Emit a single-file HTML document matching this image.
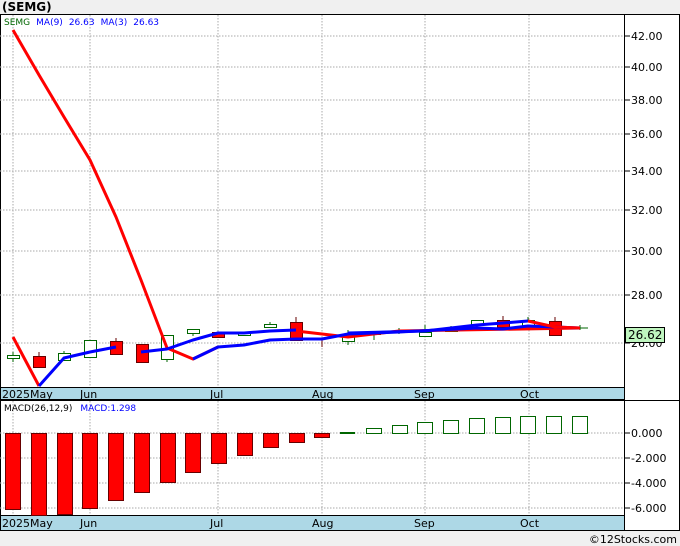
<!DOCTYPE html>
<html><head><style>
body{margin:0;background:#f0f0f0;width:680px;height:546px;overflow:hidden;font-family:"DejaVu Sans","Liberation Sans",sans-serif}
svg{display:block}
</style></head><body>
<svg width="680" height="546" xmlns="http://www.w3.org/2000/svg" font-family="DejaVu Sans, Liberation Sans, sans-serif">
<rect x="0" y="0" width="680" height="546" fill="#f0f0f0"/>
<text x="2" y="11" font-size="12" font-weight="bold" fill="#000">(SEMG)</text>
<rect x="0.5" y="14.5" width="679" height="516" fill="#fff" stroke="#000"/>
<g stroke="#aaa" stroke-dasharray="1.5,1.5" stroke-width="1">
<line x1="13" y1="15" x2="13" y2="387"/><line x1="90" y1="15" x2="90" y2="387"/><line x1="218" y1="15" x2="218" y2="387"/><line x1="322" y1="15" x2="322" y2="387"/><line x1="425" y1="15" x2="425" y2="387"/><line x1="529" y1="15" x2="529" y2="387"/>
<line x1="0" y1="36" x2="624" y2="36"/><line x1="0" y1="67" x2="624" y2="67"/><line x1="0" y1="100" x2="624" y2="100"/><line x1="0" y1="134" x2="624" y2="134"/><line x1="0" y1="171" x2="624" y2="171"/><line x1="0" y1="210" x2="624" y2="210"/><line x1="0" y1="251" x2="624" y2="251"/><line x1="0" y1="295" x2="624" y2="295"/><line x1="0" y1="343" x2="624" y2="343"/>
<line x1="13" y1="401" x2="13" y2="515"/><line x1="90" y1="401" x2="90" y2="515"/><line x1="218" y1="401" x2="218" y2="515"/><line x1="322" y1="401" x2="322" y2="515"/><line x1="425" y1="401" x2="425" y2="515"/><line x1="529" y1="401" x2="529" y2="515"/>
<line x1="0" y1="433" x2="624" y2="433"/><line x1="0" y1="458" x2="624" y2="458"/><line x1="0" y1="483" x2="624" y2="483"/><line x1="0" y1="508" x2="624" y2="508"/>
</g>
<text x="4" y="25" font-size="9"><tspan fill="#060">SEMG</tspan><tspan fill="#00f" dx="6">MA(9)</tspan><tspan fill="#00f" dx="6">26.63</tspan><tspan fill="#00f" dx="6">MA(3)</tspan><tspan fill="#00f" dx="6">26.63</tspan></text>
<!-- candles -->
<g stroke-width="1">
<g stroke="#060" fill="#fff">
<line x1="13" y1="352" x2="13" y2="362"/><rect x="7.5" y="355.5" width="12" height="3"/>
<line x1="64" y1="351" x2="64" y2="361"/><rect x="58.5" y="353.5" width="12" height="7"/>
<rect x="84.5" y="340.5" width="12" height="17"/>
<line x1="167" y1="335" x2="167" y2="362"/><rect x="161.5" y="335.5" width="12" height="24"/>
<line x1="193" y1="329" x2="193" y2="336"/><rect x="187.5" y="329.5" width="12" height="4"/>
<rect x="238.5" y="333.5" width="12" height="2"/>
<line x1="270" y1="322" x2="270" y2="328"/><rect x="264.5" y="324.5" width="12" height="3"/>
<line x1="348" y1="330" x2="348" y2="345"/><rect x="342.5" y="334.5" width="12" height="7"/>
<line x1="374" y1="331" x2="374" y2="340"/><rect x="368.5" y="332.5" width="12" height="2"/>
<line x1="399" y1="328" x2="399" y2="334"/>
<line x1="425" y1="325" x2="425" y2="337"/><rect x="419.5" y="332.5" width="12" height="4"/>
<line x1="451" y1="326" x2="451" y2="332"/><rect x="445.5" y="328.5" width="12" height="3"/>
<rect x="471.5" y="320.5" width="12" height="5"/>
<line x1="528" y1="317" x2="528" y2="326"/><rect x="522.5" y="320.5" width="12" height="6"/>
<line x1="580" y1="325" x2="580" y2="330"/><line x1="574" y1="328" x2="588" y2="328"/>
</g>
<g stroke="#600" fill="#f00">
<line x1="39" y1="352" x2="39" y2="367"/><rect x="33.5" y="356.5" width="12" height="11"/>
<line x1="116" y1="338" x2="116" y2="354"/><rect x="110.5" y="341.5" width="12" height="13"/>
<rect x="136.5" y="344.5" width="12" height="18"/>
<rect x="212.5" y="332.5" width="12" height="5"/>
<line x1="296" y1="317" x2="296" y2="341"/><rect x="290.5" y="322.5" width="12" height="18"/>
<line x1="322" y1="339" x2="322" y2="347"/>
<line x1="503" y1="316" x2="503" y2="327"/><rect x="497.5" y="320.5" width="12" height="7"/>
<line x1="555" y1="317" x2="555" y2="336"/><rect x="549.5" y="321.5" width="12" height="14"/>
</g>
</g>
<!-- MA lines -->
<g fill="none" stroke-width="3" stroke-linejoin="round">
<polyline stroke="#f00" points="13,30 39,75 64,117 90,160 116,217 141,280 167,348 193,359 218,347"/>
<polyline stroke="#f00" points="13,337 39,386"/>
<polyline stroke="#f00" points="296,331 348,337 399,331 580,328"/>
<polyline stroke="#00f" points="39,386 64,358 90,352 116,347"/>
<polyline stroke="#00f" points="141,352 167,349 193,340 218,333 244,333 270,331 296,330"/>
<polyline stroke="#00f" points="193,359 218,347 244,345 270,340 296,339 322,339 348,334 399,332 477,328 503,329 528,326 555,327 580,328"/>
<polyline stroke="#00f" points="348,333 425,331 477,325 503,323 528,321"/>
<polyline stroke="#f00" points="528,321 555,327 580,328"/>
</g>
<!-- axis -->
<line x1="624.5" y1="15" x2="624.5" y2="530" stroke="#000"/>
<g stroke="#000">
<line x1="624" y1="36" x2="630" y2="36"/><line x1="624" y1="67" x2="630" y2="67"/><line x1="624" y1="100" x2="630" y2="100"/><line x1="624" y1="134" x2="630" y2="134"/><line x1="624" y1="171" x2="630" y2="171"/><line x1="624" y1="210" x2="630" y2="210"/><line x1="624" y1="251" x2="630" y2="251"/><line x1="624" y1="295" x2="630" y2="295"/><line x1="624" y1="343" x2="630" y2="343"/>
<line x1="624" y1="433" x2="630" y2="433"/><line x1="624" y1="458" x2="630" y2="458"/><line x1="624" y1="483" x2="630" y2="483"/><line x1="624" y1="508" x2="630" y2="508"/>
</g>
<g font-size="11" fill="#000">
<text x="631" y="40">42.00</text><text x="631" y="71">40.00</text><text x="631" y="104">38.00</text><text x="631" y="138">36.00</text><text x="631" y="175">34.00</text><text x="631" y="214">32.00</text><text x="631" y="255">30.00</text><text x="631" y="299">28.00</text><text x="631" y="347">26.00</text>
<text x="631" y="437">0.000</text><text x="631" y="462">-2.000</text><text x="631" y="487">-4.000</text><text x="631" y="512">-6.000</text>
</g>
<rect x="625.5" y="327.5" width="39" height="15" fill="#bff5bf" stroke="#000"/>
<text x="628" y="339" font-size="12">26.62</text>
<!-- strips -->
<rect x="0.5" y="387.5" width="624" height="12" fill="#add8e6" stroke="#000"/>
<line x1="0" y1="400.5" x2="680" y2="400.5" stroke="#000"/>
<rect x="0.5" y="515.5" width="624" height="15" fill="#add8e6" stroke="#000"/>
<g font-size="11" fill="#000">
<text x="2" y="398">2025May</text><text x="80" y="398">Jun</text><text x="210" y="398">Jul</text><text x="312" y="398">Aug</text><text x="414" y="398">Sep</text><text x="520" y="398">Oct</text>
<text x="2" y="527">2025May</text><text x="80" y="527">Jun</text><text x="210" y="527">Jul</text><text x="312" y="527">Aug</text><text x="414" y="527">Sep</text><text x="520" y="527">Oct</text>
</g>
<text x="4" y="411" font-size="9"><tspan fill="#000">MACD(26,12,9)</tspan><tspan fill="#00f" dx="8">MACD:1.298</tspan></text>
<!-- MACD bars -->
<g stroke="#600" fill="#f00">
<rect x="5.5" y="433.5" width="15" height="76"/><rect x="31.5" y="433.5" width="15" height="82"/><rect x="57.5" y="433.5" width="15" height="81"/><rect x="82.5" y="433.5" width="15" height="75"/><rect x="108.5" y="433.5" width="15" height="67"/><rect x="134.5" y="433.5" width="15" height="59"/><rect x="160.5" y="433.5" width="15" height="49"/><rect x="185.5" y="433.5" width="15" height="39"/><rect x="211.5" y="433.5" width="15" height="30"/><rect x="237.5" y="433.5" width="15" height="22"/><rect x="263.5" y="433.5" width="15" height="14"/><rect x="289.5" y="433.5" width="15" height="9"/><rect x="314.5" y="433.5" width="15" height="4"/>
</g>
<g stroke="#060" fill="#fff">
<line x1="340" y1="433" x2="355" y2="433" stroke-width="2"/>
<rect x="366.5" y="428.5" width="15" height="5"/><rect x="392.5" y="425.5" width="15" height="8"/><rect x="417.5" y="422.5" width="15" height="11"/><rect x="443.5" y="420.5" width="15" height="13"/><rect x="469.5" y="418.5" width="15" height="15"/><rect x="495.5" y="417.5" width="15" height="16"/><rect x="520.5" y="416.5" width="15" height="17"/><rect x="546.5" y="416.5" width="15" height="17"/><rect x="572.5" y="416.5" width="15" height="17"/>
</g>
<text x="677" y="543" font-size="11" fill="#000" text-anchor="end">©12Stocks.com</text>
</svg>
</body></html>
